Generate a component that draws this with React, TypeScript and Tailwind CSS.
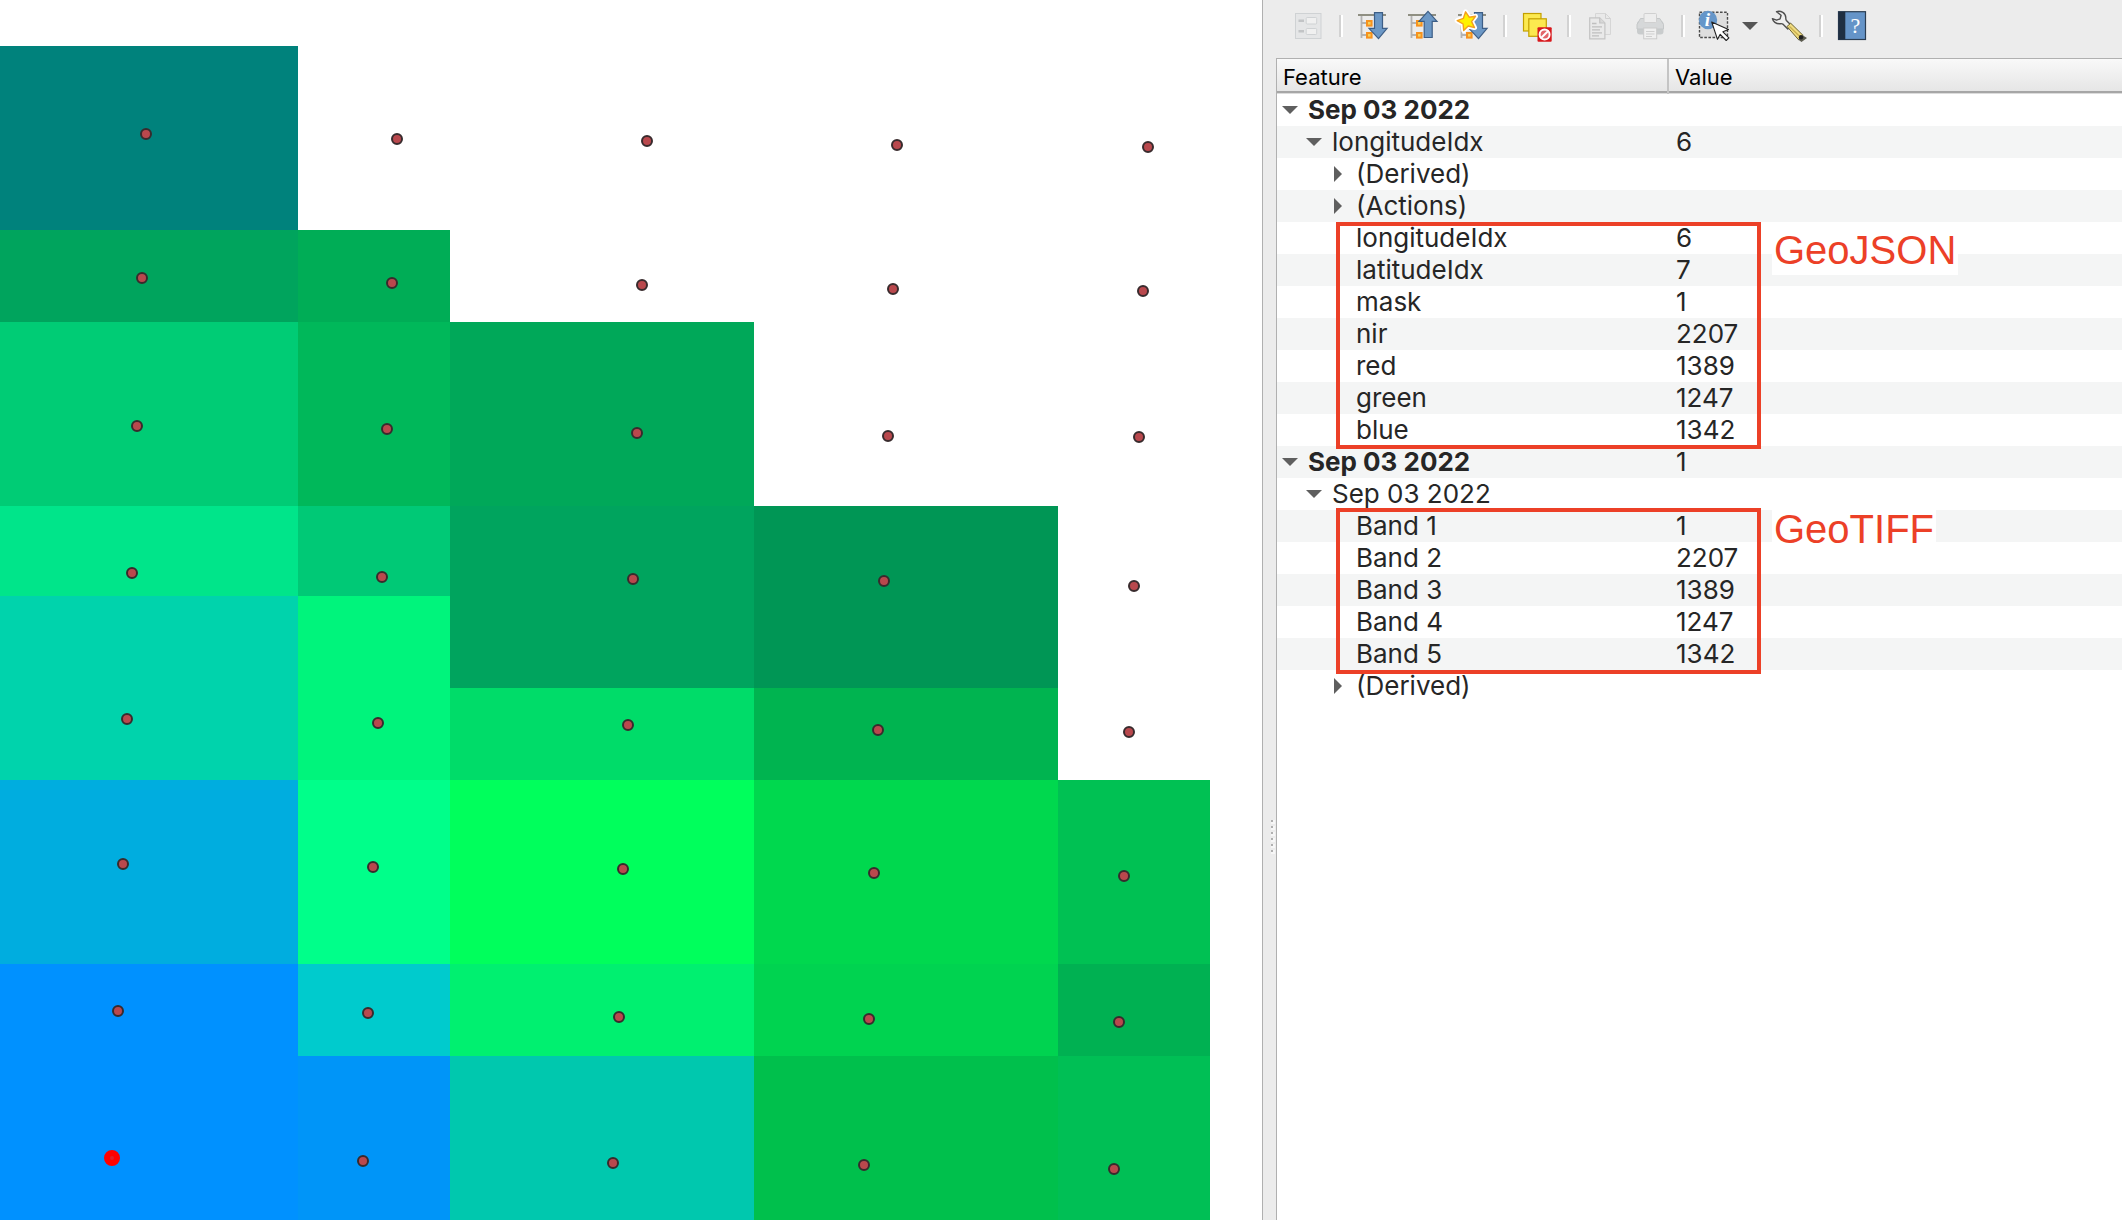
import type { ReactNode } from 'react'

interface Cell {
  area: string
  fill: string
}

interface TreeRow {
  label: string
  value?: string
  level: 0 | 1 | 2
  state?: 'open' | 'closed'
  bold?: boolean
}

// raster pixels: grid placement + colour, column by column
const cells: Cell[] = [
  { area: 'col-start-1 row-start-2', fill: 'bg-[#00827c]' },
  { area: 'col-start-1 row-start-3', fill: 'bg-[#00a45d]' },
  { area: 'col-start-1 row-start-4', fill: 'bg-[#00cc75]' },
  { area: 'col-start-1 row-start-5', fill: 'bg-[#00e58a]' },
  { area: 'col-start-1 row-start-6 row-span-2', fill: 'bg-[#00d3ac]' },
  { area: 'col-start-1 row-start-8', fill: 'bg-[#00addf]' },
  { area: 'col-start-1 row-start-9', fill: 'bg-[#0091ff]' },
  { area: 'col-start-1 row-start-10', fill: 'bg-[#0091ff]' },

  { area: 'col-start-2 row-start-3', fill: 'bg-[#00ad56]' },
  { area: 'col-start-2 row-start-4', fill: 'bg-[#00b85a]' },
  { area: 'col-start-2 row-start-5', fill: 'bg-[#00c976]' },
  { area: 'col-start-2 row-start-6 row-span-2', fill: 'bg-[#00f47c]' },
  { area: 'col-start-2 row-start-8', fill: 'bg-[#00ff8a]' },
  { area: 'col-start-2 row-start-9', fill: 'bg-[#00cbcd]' },
  { area: 'col-start-2 row-start-10', fill: 'bg-[#0095f8]' },

  { area: 'col-start-3 row-start-4', fill: 'bg-[#00a859]' },
  { area: 'col-start-3 row-start-5 row-span-2', fill: 'bg-[#00a45e]' },
  { area: 'col-start-3 row-start-7', fill: 'bg-[#00dc69]' },
  { area: 'col-start-3 row-start-8', fill: 'bg-[#00ff5c]' },
  { area: 'col-start-3 row-start-9', fill: 'bg-[#00f070]' },
  { area: 'col-start-3 row-start-10', fill: 'bg-[#00c8ae]' },

  { area: 'col-start-4 row-start-5 row-span-2', fill: 'bg-[#009655]' },
  { area: 'col-start-4 row-start-7', fill: 'bg-[#00b450]' },
  { area: 'col-start-4 row-start-8', fill: 'bg-[#00d84e]' },
  { area: 'col-start-4 row-start-9', fill: 'bg-[#00d350]' },
  { area: 'col-start-4 row-start-10', fill: 'bg-[#00c04c]' },

  { area: 'col-start-5 row-start-8', fill: 'bg-[#00c153]' },
  { area: 'col-start-5 row-start-9', fill: 'bg-[#00b152]' },
  { area: 'col-start-5 row-start-10', fill: 'bg-[#00bf55]' },
]

// extent of the map canvas, in map units
const MAP_W = 1262
const MAP_H = 1220

const points: [number, number][] = [
  [146, 134], [397, 139], [647, 141], [897, 145], [1148, 147],
  [142, 278], [392, 283], [642, 285], [893, 289], [1143, 291],
  [137, 426], [387, 429], [637, 433], [888, 436], [1139, 437],
  [132, 573], [382, 577], [633, 579], [884, 581], [1134, 586],
  [127, 719], [378, 723], [628, 725], [878, 730], [1129, 732],
  [123, 864], [373, 867], [623, 869], [874, 873], [1124, 876],
  [118, 1011], [368, 1013], [619, 1017], [869, 1019], [1119, 1022],
  [112, 1158], [363, 1161], [613, 1163], [864, 1165], [1114, 1169],
]
const SELECTED = 35

const rows: TreeRow[] = [
  { label: 'Sep 03 2022', level: 0, state: 'open', bold: true },
  { label: 'longitudeIdx', value: '6', level: 1, state: 'open' },
  { label: '(Derived)', level: 2, state: 'closed' },
  { label: '(Actions)', level: 2, state: 'closed' },
  { label: 'longitudeIdx', value: '6', level: 2 },
  { label: 'latitudeIdx', value: '7', level: 2 },
  { label: 'mask', value: '1', level: 2 },
  { label: 'nir', value: '2207', level: 2 },
  { label: 'red', value: '1389', level: 2 },
  { label: 'green', value: '1247', level: 2 },
  { label: 'blue', value: '1342', level: 2 },
  { label: 'Sep 03 2022', value: '1', level: 0, state: 'open', bold: true },
  { label: 'Sep 03 2022', level: 1, state: 'open' },
  { label: 'Band 1', value: '1', level: 2 },
  { label: 'Band 2', value: '2207', level: 2 },
  { label: 'Band 3', value: '1389', level: 2 },
  { label: 'Band 4', value: '1247', level: 2 },
  { label: 'Band 5', value: '1342', level: 2 },
  { label: '(Derived)', level: 2, state: 'closed' },
]

const indent = ['pl-[5px]', 'pl-[29px]', 'pl-[53px]']

function MapCanvas() {
  return (
    <main className="relative bg-white">
      <div className="grid h-full grid-cols-[298fr_152fr_304fr_304fr_152fr_52fr] grid-rows-[46fr_184fr_92fr_184fr_90fr_92fr_92fr_184fr_92fr_164fr]">
        {cells.map((c) => (
          <div key={c.area} className={`${c.area} ${c.fill}`} />
        ))}
      </div>
      {points.map(([x, y], i) => (
        <span
          key={i}
          className={
            i === SELECTED
              ? 'absolute size-4 -translate-1/2 rounded-full border-[6px] border-[#ff0000] bg-[#e02028]'
              : 'absolute size-3 -translate-1/2 rounded-full border-2 border-[#382b2d] bg-[#b9484d]'
          }
          style={{ left: `${(x / MAP_W) * 100}%`, top: `${(y / MAP_H) * 100}%` }}
        />
      ))}
    </main>
  )
}

function ToolButton({ label, disabled, children }: { label: string; disabled?: boolean; children: ReactNode }) {
  return (
    <button type="button" aria-label={label} disabled={disabled} className="size-8 shrink-0">
      <svg viewBox="0 0 32 32" className="size-8 overflow-visible" fill="none">
        {children}
      </svg>
    </button>
  )
}

function Separator() {
  return <div className="mx-3.5 h-[22px] w-1 shrink-0 border-r-2 border-l-2 border-r-white border-l-[#d2d2d2]" />
}

/** Tree lines with the two orange nodes, shared by expand / collapse icons. */
function TreeGlyph() {
  return (
    <>
      <path d="M4.5 6v22M4.5 13h6M4.5 25h6" stroke="#b3b3b3" strokeWidth="1.8" />
      <path d="M1 5h28" stroke="#8f8f82" strokeWidth="2" />
      <rect x="10" y="11" width="4.6" height="4.6" fill="#f5d25a" stroke="#f7921e" strokeWidth="2" />
      <rect x="10" y="23" width="4.6" height="4.6" fill="#f5d25a" stroke="#f7921e" strokeWidth="2" />
    </>
  )
}

const ARROW_DOWN = 'M17.5 2.7h8v15.6h4.6L21.5 28.6 12 18.3h5.5z'
const STAR = 'M8.6 1.8l3.6 5.4 6.3-.9-3.9 5.3 2.9 6-6.3-1.6-4.5 4.4-.6-6.4L.2 10.6l6.1-2.2z'

function Toolbar() {
  return (
    <div role="toolbar" className="flex h-[58px] items-center pb-1.5 pl-[30px]">
      <ToolButton label="View feature form" disabled>
        <rect x="2.5" y="3.5" width="25.5" height="25" fill="#e5e6e7" stroke="#cfd2d4" />
        <path d="M5.5 10.8h5.500M5.500 21.200h5.500" stroke="#c2c4c6" strokeWidth="2.6" />
        <rect x="13.2" y="7.5" width="10.5" height="6.5" rx="1" fill="#f0f0f0" stroke="#cfd2d4" />
        <rect x="13.2" y="18.5" width="10.5" height="6" rx="1" fill="#f0f0f0" stroke="#cfd2d4" />
      </ToolButton>
      <Separator />
      <div className="flex gap-[18px]">
        <ToolButton label="Expand tree">
          <TreeGlyph />
          <path d={ARROW_DOWN} fill="#6c98c6" stroke="#3d5e86" strokeWidth="1.2" />
        </ToolButton>
        <ToolButton label="Collapse tree">
          <TreeGlyph />
          <path d="M17.2 27.5V11.4H12L21 1.4l9 10h-4.8v16.1z" fill="#6c98c6" stroke="#3d5e86" strokeWidth="1.2" />
        </ToolButton>
        <ToolButton label="Expand new results by default">
          <TreeGlyph />
          <path d={ARROW_DOWN} fill="#6c98c6" stroke="#3d5e86" strokeWidth="1.2" />
          <path d={STAR} stroke="#fff" strokeWidth="5" strokeLinejoin="round" />
          <path d={STAR} fill="#fff200" stroke="#f5a01c" strokeWidth="1.4" strokeLinejoin="round" />
        </ToolButton>
      </div>
      <Separator />
      <ToolButton label="Clear results">
        <rect x="2.5" y="3.5" width="17.5" height="17.5" fill="#fce94f" stroke="#c4a000" strokeWidth="1.2" />
        <rect x="7.8" y="8.8" width="17.5" height="17.5" fill="#fce94f" stroke="#c4a000" strokeWidth="1.2" />
        <rect x="16.5" y="17.3" width="14.2" height="14.4" rx="1" fill="#d8181c" />
        <circle cx="23.6" cy="24.5" r="5" fill="#e2666a" stroke="#fff" strokeWidth="2" />
        <path d="M20.3 27.8l6.6-6.6" stroke="#fff" strokeWidth="2" />
      </ToolButton>
      <Separator />
      <div className="flex gap-[18px]">
        <ToolButton label="Copy feature" disabled>
          <path d="M10.5 3.5h10l5 5v16h-15z" fill="#e9e9e9" stroke="#d6d6d6" />
          <path d="M20.5 3.5v5h5" stroke="#d0d0d0" />
          <path d="M4.7 7.8h10l5.2 5.2v15.8H4.7z" fill="#e9e9e9" stroke="#c4c4c4" strokeWidth="1.2" />
          <path d="M14.7 7.8V13h5.2" fill="#d8d8d8" stroke="#c4c4c4" strokeWidth="1.2" />
          <path d="M7 13.5h4.5M7 16.8h10M7 19.8h8M7 22.8h10M7 25.8h7" stroke="#bfbfbf" strokeWidth="1.3" />
        </ToolButton>
        <ToolButton label="Print response" disabled>
          <rect x="2" y="11" width="26.5" height="13.5" rx="3" fill="#c9cccd" />
          <path d="M5.5 8.5h19.3l3.7 6V19H2v-4.5z" fill="#d6d8d9" stroke="#c4c7c8" />
          <rect x="9" y="3.5" width="12.5" height="9" rx="1" fill="#ededed" stroke="#d0d0d0" />
          <rect x="8.7" y="18" width="13" height="10.8" fill="#f0f0f0" stroke="#cbcbcb" />
          <path d="M11 21.5h8.5M11 24h8.5M11 26.5h6" stroke="#cfcfcf" />
        </ToolButton>
      </div>
      <Separator />
      <ToolButton label="Identify feature">
        <rect x=".5" y="2.3" width="28" height="25.2" fill="#dedede" stroke="#4a4a4a" strokeWidth="1.4" strokeDasharray="2.6 1.5" />
        <circle cx="9" cy="10" r="9.2" fill="#6596c9" />
        <text x="8.5" y="16" textAnchor="middle" fill="#fff" fontSize="19" fontWeight="bold" fontStyle="italic" fontFamily="Liberation Serif, serif">
          i
        </text>
        <path
          d="M12.7 12l16.8 7.6-5.6 2.2 6 6-2.7 2.7-6-6.2-2.7 5z"
          fill="#fff"
          stroke="#222"
          strokeWidth="1.1"
          strokeLinejoin="round"
        />
      </ToolButton>
      <button type="button" aria-label="Identify mode" className="mr-[15px] ml-[11px] w-4 shrink-0">
        <svg viewBox="0 0 16 8" className="h-2 w-4 fill-[#555]">
          <path d="M0 0h16L8 8z" />
        </svg>
      </button>
      <ToolButton label="Identify settings">
        <path
          d="M3.500 1.600C8 .3 12.600 3 12.800 7.500c0 1.400-.2 2 .6 3l5 5-3.600 3.600-5-5c-1-.8-1.600-.5-3-.3C3 14 0 11.500-.6 8.600l4.200 1.600 3.500-1.400 1-3.500z"
          fill="#efefef"
          stroke="#4f4f4f"
          strokeWidth="1.4"
          strokeLinejoin="round"
        />
        <path d="M14 16.5l3.7-3.3 12.5 12.3-4.7 4.2z" fill="#f0dc82" stroke="#6b6230" />
        <path d="M16.5 16.5l10 9.8" stroke="#c9ae4c" strokeWidth="1.2" />
        <path d="M25 29.5l4.5-4.2 4.5 2.7-5.500 4z" fill="#5c5c50" />
        <circle cx="28" cy="27.3" r="2.2" fill="#222" />
      </ToolButton>
      <Separator />
      <ToolButton label="Help">
        <rect x="1.5" y="1.7" width="27" height="27.8" fill="#6594c8" stroke="#2b3d52" strokeWidth="1.2" />
        <rect x="1.5" y="1.7" width="6.8" height="27.8" fill="#1f2f42" />
        <text x="18.5" y="22.5" textAnchor="middle" fill="#fff" fontSize="22" fontFamily="Liberation Serif, serif">
          ?
        </text>
      </ToolButton>
    </div>
  )
}

function SplitterGrip() {
  return (
    <div className="flex w-[13px] shrink-0 flex-col items-center gap-1 pt-[762px] pl-1">
      {[0, 1, 2, 3, 4, 5].map((n) => (
        <span key={n} className="size-0.5 bg-[#b0b0b0] shadow-[1px_1px_0_1px_#f7f7f7]" />
      ))}
    </div>
  )
}

function Disclosure({ row }: { row: TreeRow }) {
  if (!row.state) return <span className="w-4 shrink-0" />
  return (
    <button
      type="button"
      aria-label={`Toggle ${row.label}`}
      aria-expanded={row.state === 'open'}
      className="grid size-4 shrink-0 place-items-center"
    >
      <svg viewBox="0 0 16 16" className="size-4 fill-[#5f5f5f]">
        <path d={row.state === 'open' ? 'M0 4h16L8 12z' : 'M4 0l8 8-8 8z'} />
      </svg>
    </button>
  )
}

function ResultsTree() {
  return (
    <div className="relative min-w-0 flex-1 overflow-hidden border-t border-l border-[#b0b0b0] bg-white">
      <table className="w-full table-fixed border-separate border-spacing-0 text-left">
        <thead>
          <tr className="h-[35px] bg-linear-to-b from-[#f9f9f9] to-[#e4e4e4] text-[22px] leading-8 text-black">
            <th className="w-[392px] border-r-2 border-r-[#c4c4c4] p-0 pl-1.5 font-normal shadow-[inset_0_-1px_0_#dcdcdc,inset_0_-3px_0_#a6a6a6]">
              Feature
            </th>
            <th className="p-0 pl-1.5 font-normal shadow-[inset_0_-1px_0_#dcdcdc,inset_0_-3px_0_#a6a6a6]">Value</th>
          </tr>
        </thead>
        <tbody className="text-[26px] leading-8 text-[#262626]">
          {rows.map((row, i) => (
            <tr key={i} className="h-8 even:bg-[#f4f5f5]">
              <td className="p-0">
                <div className={`flex h-8 items-center gap-2.5 ${indent[row.level]}`}>
                  <Disclosure row={row} />
                  <span className={row.bold ? 'font-bold' : ''}>{row.label}</span>
                </div>
              </td>
              <td className="p-0 pl-[7px]">{row.value}</td>
            </tr>
          ))}
        </tbody>
      </table>

      {/* annotations drawn over the results */}
      <div className="pointer-events-none absolute top-[163px] left-[59px] h-[227px] w-[425px] border-4 border-[#ec4027]" />
      <div className="pointer-events-none absolute top-[449px] left-[59px] h-[166px] w-[425px] border-4 border-[#ec4027]" />
      <p className="absolute top-[168px] left-[495px] bg-white px-0.5 pb-0.5 font-['Liberation_Sans',Arial,sans-serif] text-[40px] leading-[46px] text-[#ec4027]">
        GeoJSON
      </p>
      <p className="absolute top-[447px] left-[495px] bg-white px-0.5 pb-0.5 font-['Liberation_Sans',Arial,sans-serif] text-[40px] leading-[46px] text-[#ec4027]">
        GeoTIFF
      </p>
    </div>
  )
}

export default function App() {
  return (
    <div className="grid min-h-screen grid-cols-[minmax(0,1262fr)_minmax(0,860fr)] overflow-hidden bg-white font-['Inter',sans-serif]">
      <MapCanvas />
      <aside className="flex flex-col border-l border-[#b0b0b0] bg-[#ececec]">
        <Toolbar />
        <div className="flex flex-1">
          <SplitterGrip />
          <ResultsTree />
        </div>
      </aside>
    </div>
  )
}
